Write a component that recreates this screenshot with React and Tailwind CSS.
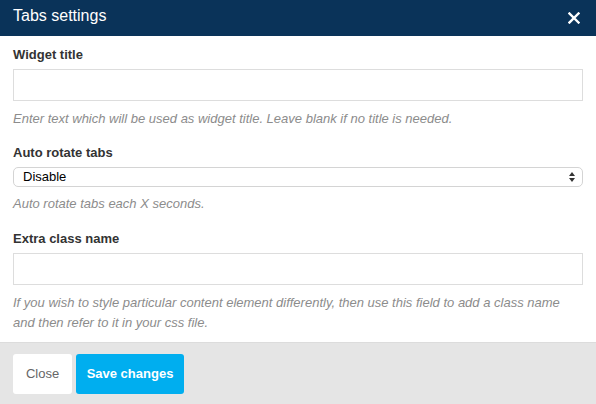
import React from "react";

const font = { fontFamily: '"Liberation Sans", Arial, Helvetica, sans-serif' };

function Label({ children, className = "" }) {
  return (
    <div className={`text-[13px] leading-[18px] font-bold text-[#333333] ${className}`}>
      {children}
    </div>
  );
}

function Help({ children, className = "" }) {
  return (
    <div className={`text-[13px] italic text-[#8c8c8c] ${className}`}>{children}</div>
  );
}

export default function App() {
  return (
    <div className="w-[596px] h-[404px] bg-white flex flex-col overflow-hidden" style={font}>
      <div className="h-[36px] bg-[#0a3359] flex items-start justify-between pl-[13px] pr-[16px] pt-[6px] shrink-0">
        <div className="text-[16px] leading-[20px] text-white">Tabs settings</div>
        <svg width="12" height="12" viewBox="0 0 12 12" className="mt-[6px]">
          <path d="M1.5 1.5 L10.5 10.5 M10.5 1.5 L1.5 10.5" stroke="white" strokeWidth="2.4" strokeLinecap="square" />
        </svg>
      </div>

      <div className="flex-1 px-[13px] pt-[10px] flex flex-col">
        <Label>Widget title</Label>
        <div className="mt-[5px] h-[32px] border border-[#dddddd] bg-white" />
        <Help className="mt-[9px] leading-[18px]">
          Enter text which will be used as widget title. Leave blank if no title is needed.
        </Help>

        <Label className="mt-[16px]">Auto rotate tabs</Label>
        <div className="mt-[5px] h-[20px] border border-[#d4d4d4] rounded-[5px] bg-white flex items-center justify-between pl-[9px] pr-[6px]">
          <span className="text-[13px] leading-[18px] text-black">Disable</span>
          <svg width="8" height="12" viewBox="0 0 8 12">
            <path d="M4 1 L7 5 L1 5 Z" fill="#333" />
            <path d="M4 11 L7 7 L1 7 Z" fill="#333" />
          </svg>
        </div>
        <Help className="mt-[8px] leading-[18px]">Auto rotate tabs each X seconds.</Help>

        <Label className="mt-[17px]">Extra class name</Label>
        <div className="mt-[5px] h-[32px] border border-[#dddddd] bg-white" />
        <Help className="mt-[8px] leading-[19.5px]">
          If you wish to style particular content element differently, then use this field to add a class name and then refer to it in your css file.
        </Help>
      </div>

      <div className="h-[62px] shrink-0 bg-[#e5e5e5] border-t border-[#dcdcdc] flex items-start gap-[4px] px-[13px] pt-[11px]">
        <button className="h-[40px] w-[59px] bg-white rounded-[3px] text-[13px] text-[#666666]">
          Close
        </button>
        <button className="h-[40px] w-[108px] bg-[#00aeef] rounded-[3px] text-[13px] font-bold text-white">
          Save changes
        </button>
      </div>
    </div>
  );
}
